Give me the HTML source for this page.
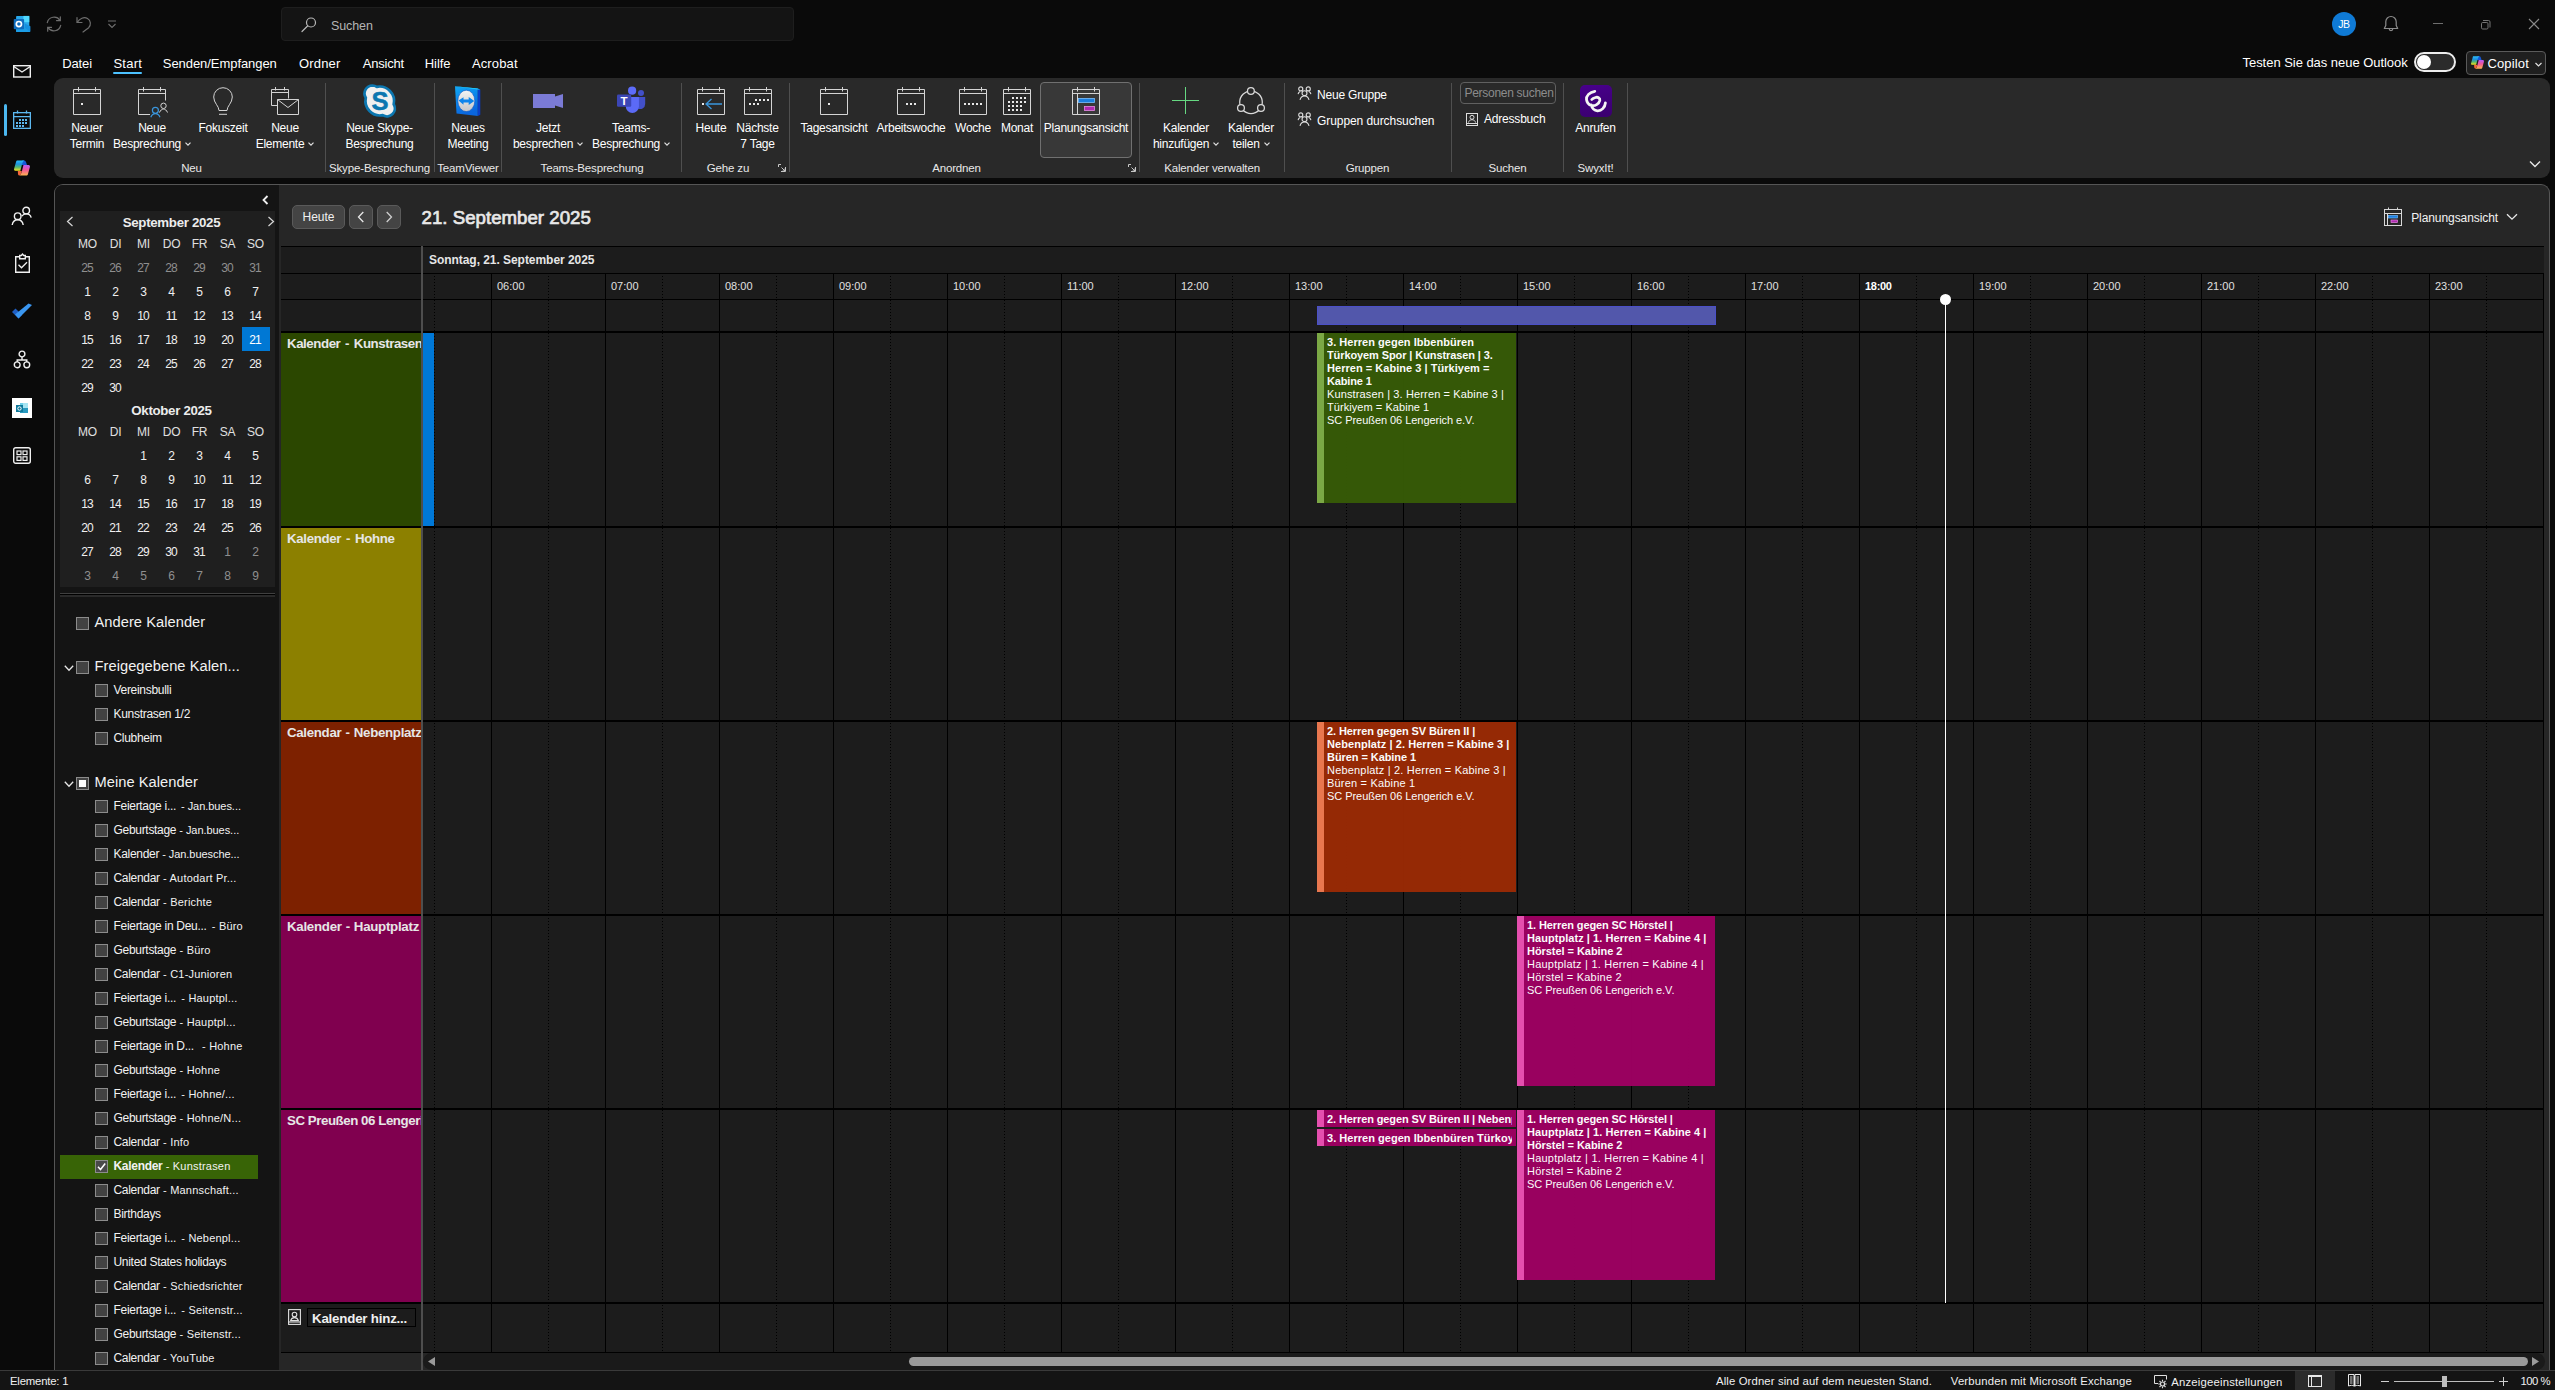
<!DOCTYPE html>
<html lang="de"><head><meta charset="utf-8"><title>Kalender - Outlook</title>
<style>
*{box-sizing:border-box;margin:0;padding:0}
html,body{width:2555px;height:1390px;overflow:hidden;background:#0a0a0a}
body{position:relative;font-family:"Liberation Sans","DejaVu Sans",sans-serif;font-size:12px;color:#fff}
div{position:absolute}
.t{white-space:nowrap}
svg{position:absolute;overflow:visible}
</style></head>
<body>
<div style="left:54px;top:78px;width:2496px;height:100px;background:#292929;border-radius:9px;"></div>
<div style="left:54px;top:184px;width:2496px;height:1187px;background:#262626;border-radius:9px 9px 0 0;border:1px solid #555;border-bottom:none;overflow:hidden;"></div>
<div style="left:55px;top:185px;width:224px;height:1185px;background:#141414;border-radius:8px 0 0 0;"></div>
<div style="left:60px;top:211px;width:215px;height:376px;background:#1f1f1f;"></div>
<div style="left:60px;top:593px;width:215px;height:1px;background:#404040;"></div>
<div style="left:60px;top:594px;width:215px;height:1px;background:#000;"></div>
<div style="left:60px;top:595px;width:215px;height:2px;background:#2a2a2a;"></div>
<div style="left:0px;top:1370px;width:2555px;height:1px;background:#3a3a3a;"></div>
<div style="left:0px;top:1371px;width:2555px;height:19px;background:#141414;"></div>
<div style="left:281px;top:246px;width:2263px;height:1107px;background:#1c1c1c;"></div>
<div style="left:281px;top:246px;width:2263px;height:1px;background:#000;"></div>
<div style="left:281px;top:273px;width:2263px;height:1px;background:#000;"></div>
<div style="left:281px;top:299px;width:2263px;height:1px;background:#000;"></div>
<div style="left:281px;top:331px;width:2263px;height:2px;background:#000;"></div>
<div style="left:281px;top:526px;width:2263px;height:2px;background:#000;"></div>
<div style="left:281px;top:720px;width:2263px;height:2px;background:#000;"></div>
<div style="left:281px;top:914px;width:2263px;height:2px;background:#000;"></div>
<div style="left:281px;top:1108px;width:2263px;height:2px;background:#000;"></div>
<div style="left:281px;top:1302px;width:2263px;height:2px;background:#000;"></div>
<div style="left:281px;top:1352px;width:2263px;height:1px;background:#000;"></div>
<div style="left:491px;top:274px;width:1px;height:1078px;background:#000;"></div>
<div style="left:605px;top:274px;width:1px;height:1078px;background:#000;"></div>
<div style="left:719px;top:274px;width:1px;height:1078px;background:#000;"></div>
<div style="left:833px;top:274px;width:1px;height:1078px;background:#000;"></div>
<div style="left:947px;top:274px;width:1px;height:1078px;background:#000;"></div>
<div style="left:1061px;top:274px;width:1px;height:1078px;background:#000;"></div>
<div style="left:1175px;top:274px;width:1px;height:1078px;background:#000;"></div>
<div style="left:1289px;top:274px;width:1px;height:1078px;background:#000;"></div>
<div style="left:1403px;top:274px;width:1px;height:1078px;background:#000;"></div>
<div style="left:1517px;top:274px;width:1px;height:1078px;background:#000;"></div>
<div style="left:1631px;top:274px;width:1px;height:1078px;background:#000;"></div>
<div style="left:1745px;top:274px;width:1px;height:1078px;background:#000;"></div>
<div style="left:1859px;top:274px;width:1px;height:1078px;background:#000;"></div>
<div style="left:1973px;top:274px;width:1px;height:1078px;background:#000;"></div>
<div style="left:2087px;top:274px;width:1px;height:1078px;background:#000;"></div>
<div style="left:2201px;top:274px;width:1px;height:1078px;background:#000;"></div>
<div style="left:2315px;top:274px;width:1px;height:1078px;background:#000;"></div>
<div style="left:2429px;top:274px;width:1px;height:1078px;background:#000;"></div>
<div style="left:2543px;top:274px;width:1px;height:1078px;background:#000;"></div>
<div style="left:434px;top:276px;width:1px;height:1076px;background:repeating-linear-gradient(to bottom,#000 0,#000 1px,transparent 1px,transparent 3px);"></div>
<div style="left:548px;top:276px;width:1px;height:1076px;background:repeating-linear-gradient(to bottom,#000 0,#000 1px,transparent 1px,transparent 3px);"></div>
<div style="left:662px;top:276px;width:1px;height:1076px;background:repeating-linear-gradient(to bottom,#000 0,#000 1px,transparent 1px,transparent 3px);"></div>
<div style="left:776px;top:276px;width:1px;height:1076px;background:repeating-linear-gradient(to bottom,#000 0,#000 1px,transparent 1px,transparent 3px);"></div>
<div style="left:890px;top:276px;width:1px;height:1076px;background:repeating-linear-gradient(to bottom,#000 0,#000 1px,transparent 1px,transparent 3px);"></div>
<div style="left:1004px;top:276px;width:1px;height:1076px;background:repeating-linear-gradient(to bottom,#000 0,#000 1px,transparent 1px,transparent 3px);"></div>
<div style="left:1118px;top:276px;width:1px;height:1076px;background:repeating-linear-gradient(to bottom,#000 0,#000 1px,transparent 1px,transparent 3px);"></div>
<div style="left:1232px;top:276px;width:1px;height:1076px;background:repeating-linear-gradient(to bottom,#000 0,#000 1px,transparent 1px,transparent 3px);"></div>
<div style="left:1346px;top:276px;width:1px;height:1076px;background:repeating-linear-gradient(to bottom,#000 0,#000 1px,transparent 1px,transparent 3px);"></div>
<div style="left:1460px;top:276px;width:1px;height:1076px;background:repeating-linear-gradient(to bottom,#000 0,#000 1px,transparent 1px,transparent 3px);"></div>
<div style="left:1574px;top:276px;width:1px;height:1076px;background:repeating-linear-gradient(to bottom,#000 0,#000 1px,transparent 1px,transparent 3px);"></div>
<div style="left:1688px;top:276px;width:1px;height:1076px;background:repeating-linear-gradient(to bottom,#000 0,#000 1px,transparent 1px,transparent 3px);"></div>
<div style="left:1802px;top:276px;width:1px;height:1076px;background:repeating-linear-gradient(to bottom,#000 0,#000 1px,transparent 1px,transparent 3px);"></div>
<div style="left:1916px;top:276px;width:1px;height:1076px;background:repeating-linear-gradient(to bottom,#000 0,#000 1px,transparent 1px,transparent 3px);"></div>
<div style="left:2030px;top:276px;width:1px;height:1076px;background:repeating-linear-gradient(to bottom,#000 0,#000 1px,transparent 1px,transparent 3px);"></div>
<div style="left:2144px;top:276px;width:1px;height:1076px;background:repeating-linear-gradient(to bottom,#000 0,#000 1px,transparent 1px,transparent 3px);"></div>
<div style="left:2258px;top:276px;width:1px;height:1076px;background:repeating-linear-gradient(to bottom,#000 0,#000 1px,transparent 1px,transparent 3px);"></div>
<div style="left:2372px;top:276px;width:1px;height:1076px;background:repeating-linear-gradient(to bottom,#000 0,#000 1px,transparent 1px,transparent 3px);"></div>
<div style="left:2486px;top:276px;width:1px;height:1076px;background:repeating-linear-gradient(to bottom,#000 0,#000 1px,transparent 1px,transparent 3px);"></div>
<div style="left:421px;top:246px;width:2px;height:1124px;background:#4e4e4e;"></div>
<div style="left:281px;top:333px;width:140px;height:193px;background:#2b4700;overflow:hidden"><div class="t" style="left:6px;top:1.750px;font-size:13.3px;line-height:18px;font-weight:700;color:#e6e6e6;letter-spacing:-0.45px;word-spacing:1.5px">Kalender - Kunstrasen</div></div>
<div style="left:281px;top:528px;width:140px;height:192px;background:#8c8000;overflow:hidden"><div class="t" style="left:6px;top:1.750px;font-size:13.3px;line-height:18px;font-weight:700;color:#e6e6e6;letter-spacing:-0.34px;word-spacing:1.5px">Kalender - Hohne</div></div>
<div style="left:281px;top:722px;width:140px;height:192px;background:#7d2100;overflow:hidden"><div class="t" style="left:6px;top:1.750px;font-size:13.3px;line-height:18px;font-weight:700;color:#e6e6e6;letter-spacing:-0.32px;word-spacing:0.8px">Calendar - Nebenplatz</div></div>
<div style="left:281px;top:916px;width:140px;height:192px;background:#80004f;overflow:hidden"><div class="t" style="left:6px;top:1.750px;font-size:13.3px;line-height:18px;font-weight:700;color:#e6e6e6;letter-spacing:-0.28px;word-spacing:0.6px">Kalender - Hauptplatz</div></div>
<div style="left:281px;top:1110px;width:140px;height:192px;background:#80004f;overflow:hidden"><div class="t" style="left:6px;top:1.750px;font-size:13.3px;line-height:18px;font-weight:700;color:#e6e6e6;letter-spacing:-0.45px;word-spacing:0px">SC Preußen 06 Lengerich</div></div>
<div style="left:423px;top:333px;width:11px;height:193px;background:#0078d7;"></div>
<div class="t" style="top:251.7px;font-size:12px;line-height:17px;color:#e6e6e6;font-weight:700;letter-spacing:-0.049px;left:429px;">Sonntag, 21. September 2025</div>
<div class="t" style="top:278.5px;font-size:11px;line-height:15px;color:#e0e0e0;left:497px;">06:00</div>
<div class="t" style="top:278.5px;font-size:11px;line-height:15px;color:#e0e0e0;left:611px;">07:00</div>
<div class="t" style="top:278.5px;font-size:11px;line-height:15px;color:#e0e0e0;left:725px;">08:00</div>
<div class="t" style="top:278.5px;font-size:11px;line-height:15px;color:#e0e0e0;left:839px;">09:00</div>
<div class="t" style="top:278.5px;font-size:11px;line-height:15px;color:#e0e0e0;left:953px;">10:00</div>
<div class="t" style="top:278.5px;font-size:11px;line-height:15px;color:#e0e0e0;left:1067px;">11:00</div>
<div class="t" style="top:278.5px;font-size:11px;line-height:15px;color:#e0e0e0;left:1181px;">12:00</div>
<div class="t" style="top:278.5px;font-size:11px;line-height:15px;color:#e0e0e0;left:1295px;">13:00</div>
<div class="t" style="top:278.5px;font-size:11px;line-height:15px;color:#e0e0e0;left:1409px;">14:00</div>
<div class="t" style="top:278.5px;font-size:11px;line-height:15px;color:#e0e0e0;left:1523px;">15:00</div>
<div class="t" style="top:278.5px;font-size:11px;line-height:15px;color:#e0e0e0;left:1637px;">16:00</div>
<div class="t" style="top:278.5px;font-size:11px;line-height:15px;color:#e0e0e0;left:1751px;">17:00</div>
<div class="t" style="top:278.5px;font-size:11px;line-height:15px;color:#fff;font-weight:700;letter-spacing:-0.3px;left:1865px;">18:00</div>
<div class="t" style="top:278.5px;font-size:11px;line-height:15px;color:#e0e0e0;left:1979px;">19:00</div>
<div class="t" style="top:278.5px;font-size:11px;line-height:15px;color:#e0e0e0;left:2093px;">20:00</div>
<div class="t" style="top:278.5px;font-size:11px;line-height:15px;color:#e0e0e0;left:2207px;">21:00</div>
<div class="t" style="top:278.5px;font-size:11px;line-height:15px;color:#e0e0e0;left:2321px;">22:00</div>
<div class="t" style="top:278.5px;font-size:11px;line-height:15px;color:#e0e0e0;left:2435px;">23:00</div>
<div style="left:1317px;top:306px;width:399px;height:19px;background:#5257ab;border:1px solid #4b50c8"></div>
<div style="left:1317px;top:333px;width:199px;height:170px;background:rgba(55,92,6,0.95);overflow:hidden"><div style="left:0;top:0;width:6.500px;height:100%;background:#7ba845"></div><div style="left:10px;top:3px;right:0px;height:167px;overflow:hidden;font-size:11px;line-height:13px;color:#fbfbfb;white-space:nowrap"><b style="letter-spacing:0.031px">3. Herren gegen Ibbenbüren</b><br><b style="letter-spacing:-0.099px">Türkoyem Spor | Kunstrasen | 3.</b><br><b style="letter-spacing:0.033px">Herren = Kabine 3 | Türkiyem =</b><br><b style="letter-spacing:-0.156px">Kabine 1</b><br><span style="letter-spacing:0.133px">Kunstrasen | 3. Herren = Kabine 3 |</span><br><span style="letter-spacing:0.058px">Türkiyem = Kabine 1</span><br><span style="letter-spacing:-0.05px">SC Preußen 06 Lengerich e.V.</span></div></div>
<div style="left:1317px;top:722px;width:199px;height:170px;background:rgba(156,42,4,0.95);overflow:hidden"><div style="left:0;top:0;width:6.500px;height:100%;background:#e8774f"></div><div style="left:10px;top:3px;right:0px;height:167px;overflow:hidden;font-size:11px;line-height:13px;color:#fbfbfb;white-space:nowrap"><b style="letter-spacing:-0.1px">2. Herren gegen SV Büren II |</b><br><b style="letter-spacing:0.066px">Nebenplatz | 2. Herren = Kabine 3 |</b><br><b style="letter-spacing:-0.067px">Büren = Kabine 1</b><br><span style="letter-spacing:0.187px">Nebenplatz | 2. Herren = Kabine 3 |</span><br><span style="letter-spacing:0.186px">Büren = Kabine 1</span><br><span style="letter-spacing:-0.043px">SC Preußen 06 Lengerich e.V.</span></div></div>
<div style="left:1517px;top:916px;width:198px;height:170px;background:rgba(160,0,99,0.95);overflow:hidden"><div style="left:0;top:0;width:6.500px;height:100%;background:#e44fae"></div><div style="left:10px;top:3px;right:0px;height:167px;overflow:hidden;font-size:11px;line-height:13px;color:#fbfbfb;white-space:nowrap"><b style="letter-spacing:-0.099px">1. Herren gegen SC Hörstel |</b><br><b style="letter-spacing:0.054px">Hauptplatz | 1. Herren = Kabine 4 |</b><br><b style="letter-spacing:-0.049px">Hörstel = Kabine 2</b><br><span style="letter-spacing:0.217px">Hauptplatz | 1. Herren = Kabine 4 |</span><br><span style="letter-spacing:0.227px">Hörstel = Kabine 2</span><br><span style="letter-spacing:-0.05px">SC Preußen 06 Lengerich e.V.</span></div></div>
<div style="left:1517px;top:1110px;width:198px;height:170px;background:rgba(160,0,99,0.95);overflow:hidden"><div style="left:0;top:0;width:6.500px;height:100%;background:#e44fae"></div><div style="left:10px;top:3px;right:0px;height:167px;overflow:hidden;font-size:11px;line-height:13px;color:#fbfbfb;white-space:nowrap"><b style="letter-spacing:-0.099px">1. Herren gegen SC Hörstel |</b><br><b style="letter-spacing:0.054px">Hauptplatz | 1. Herren = Kabine 4 |</b><br><b style="letter-spacing:-0.049px">Hörstel = Kabine 2</b><br><span style="letter-spacing:0.217px">Hauptplatz | 1. Herren = Kabine 4 |</span><br><span style="letter-spacing:0.227px">Hörstel = Kabine 2</span><br><span style="letter-spacing:-0.05px">SC Preußen 06 Lengerich e.V.</span></div></div>
<div style="left:1317px;top:1110px;width:199px;height:17px;background:rgba(160,0,99,0.95);overflow:hidden"><div style="left:0;top:0;width:6.500px;height:100%;background:#e44fae"></div><div style="left:10px;top:3px;right:4px;height:14px;overflow:hidden;font-size:11px;line-height:13px;color:#fbfbfb;white-space:nowrap"><b style="letter-spacing:-0.102px">2. Herren gegen SV Büren II | Nebenplatz</b></div></div>
<div style="left:1317px;top:1129px;width:199px;height:17px;background:rgba(160,0,99,0.95);overflow:hidden"><div style="left:0;top:0;width:6.500px;height:100%;background:#e44fae"></div><div style="left:10px;top:3px;right:4px;height:14px;overflow:hidden;font-size:11px;line-height:13px;color:#fbfbfb;white-space:nowrap"><b style="letter-spacing:0.032px">3. Herren gegen Ibbenbüren Türkoyem</b></div></div>
<div style="left:1945px;top:300px;width:1px;height:1003px;background:#fff;"></div>
<div style="left:1940px;top:294px;width:11px;height:11px;background:#fff;border-radius:50%"></div>
<svg style="left:288px;top:1309px" width="13" height="16" viewBox="0 0 13 16" fill="none" stroke="#e0e0e0" stroke-width="1.1"><rect x="0.6" y="0.6" width="11.8" height="14.8"/><circle cx="6.5" cy="5.6" r="2.3"/><path d="M2.6 11.6c.6-2 2.2-3 3.9-3s3.300 1 3.900 3z"/><path d="M0 13h13" stroke="#e0e0e0"/></svg>
<div style="left:307px;top:1308px;width:109px;height:19px;background:#1c1c1c;border:1px solid #000"></div>
<div class="t" style="top:1308.5px;font-size:13.3px;line-height:19px;color:#f0f0f0;font-weight:700;letter-spacing:-0.2px;left:312px;">Kalender hinz...</div>
<div style="left:423px;top:1353px;width:2122px;height:17px;background:#1a1a1a;border-radius:8.5px"></div>
<div style="left:909px;top:1357px;width:1619px;height:9px;background:#9a9a9a;border-radius:5px"></div>
<svg style="left:428px;top:1357px" width="7" height="9"><path d="M7 0v9L0 4.500z" fill="#9a9a9a"/></svg>
<svg style="left:2532px;top:1357px" width="7" height="9"><path d="M0 0v9L7 4.500z" fill="#9a9a9a"/></svg>
<svg style="left:13px;top:15px" width="18" height="18" viewBox="0 0 18 18" fill="none" ><rect x="3.100" y=".900" width="13.200" height="16.200" rx=".800" fill="#28a8ea"/><rect x="10.400" y=".900" width="5.900" height="6.300" fill="#50d9ff"/><path d="M3.100 7.200h7.300v6H3.100z" fill="#0f78d4"/><path d="M11.800 8.400l5.600 2.800v5.100a.8.800 0 0 1-.8.800H11.800z" fill="#1490df"/><path d="M3.100 14.200l8.700-1.500 5.300 4.100a1 1 0 0 1-.5.300H3.900a.8.800 0 0 1-.8-.8z" fill="#1b9de6"/><rect x=".750" y="3.900" width="10.350" height="10.350" rx=".900" fill="#0f6cbd"/><circle cx="5.900" cy="9.100" r="2.600" stroke="#fff" stroke-width="1.700"/></svg>
<svg style="left:45px;top:15px" width="18" height="18" viewBox="0 0 18 18" fill="none" ><g stroke="#6e6e6e" stroke-width="1.200" stroke-linecap="round"><path d="M2.300 7.600A7 7 0 0 1 15 5.300M15.700 10.400A7 7 0 0 1 3 12.700"/><path d="M15.300 1.800v3.800h-3.800M2.700 16.200v-3.800h3.800"/></g></svg>
<svg style="left:75px;top:15px" width="18" height="18" viewBox="0 0 18 18" fill="none" ><g stroke="#6e6e6e" stroke-width="1.200" stroke-linecap="round" stroke-linejoin="round"><path d="M2 2.500v5h5"/><path d="M2.300 7.300C4.500 3.500 9 1.500 12.500 3.500c3.500 2 3.700 6.500 1.200 9.200L8 17"/></g></svg>
<svg style="left:107px;top:20px" width="10" height="9" viewBox="0 0 10 9" fill="none" ><path d="M1 1h8M1.500 4l3.500 3.500L8.500 4" stroke="#6e6e6e" stroke-width="1.100"/></svg>
<div style="left:281px;top:7px;width:513px;height:34px;background:#141414;border-radius:4px;border:1px solid #1e1e1e"></div>
<svg style="left:300px;top:16px" width="18" height="18" viewBox="0 0 18 18" fill="none" ><circle cx="11" cy="6.500" r="4.500" stroke="#b8b8b8" stroke-width="1.200"/><path d="M7.800 9.800L2 15.500" stroke="#b8b8b8" stroke-width="1.200" stroke-linecap="round"/></svg>
<div class="t" style="top:16.6px;font-size:12.5px;line-height:18px;color:#b4b4b4;letter-spacing:-0.1px;left:331px;">Suchen</div>
<div style="left:2332px;top:12px;width:24px;height:24px;background:#0f7ad5;border-radius:50%"></div>
<div class="t" style="top:17.0px;font-size:10.5px;line-height:15px;color:#fff;letter-spacing:-0.5px;left:2044px;width:600px;text-align:center;">JB</div>
<svg style="left:2381px;top:14px" width="20" height="20" viewBox="0 0 20 20" fill="none" ><g stroke="#8c8c8c" stroke-width="1.200" stroke-linejoin="round"><path d="M10 2.500a5.200 5.200 0 0 0-5.200 5.200v3.800L3.300 14.500h13.400l-1.500-3V7.700A5.200 5.200 0 0 0 10 2.500z"/><path d="M8.200 14.800a1.800 1.800 0 0 0 3.600 0"/></g></svg>
<div style="left:2433px;top:23px;width:10px;height:1px;background:#6e6e6e;"></div>
<svg style="left:2480px;top:18px" width="12" height="12" viewBox="0 0 12 12" fill="none" ><path d="M3 2.500h5.500a1.500 1.500 0 0 1 1.500 1.500V9.500" stroke="#757575"/><rect x="1.500" y="4.500" width="6.500" height="6.500" rx="1.200" stroke="#757575"/></svg>
<svg style="left:2528px;top:18px" width="12" height="12" viewBox="0 0 12 12" fill="none" ><path d="M1 1l10 10M11 1L1 11" stroke="#8a8a8a" stroke-width="1.100"/></svg>
<div class="t" style="top:54.5px;font-size:13px;line-height:18px;color:#fff;letter-spacing:-0.11px;left:62.2px;">Datei</div>
<div class="t" style="top:54.5px;font-size:13px;line-height:18px;color:#fff;letter-spacing:0.269px;left:113.4px;">Start</div>
<div class="t" style="top:54.5px;font-size:13px;line-height:18px;color:#fff;letter-spacing:-0.058px;left:162.8px;">Senden/Empfangen</div>
<div class="t" style="top:54.5px;font-size:13px;line-height:18px;color:#fff;letter-spacing:0.206px;left:298.9px;">Ordner</div>
<div class="t" style="top:54.5px;font-size:13px;line-height:18px;color:#fff;letter-spacing:-0.219px;left:362.8px;">Ansicht</div>
<div class="t" style="top:54.5px;font-size:13px;line-height:18px;color:#fff;letter-spacing:-0.081px;left:424.8px;">Hilfe</div>
<div class="t" style="top:54.5px;font-size:13px;line-height:18px;color:#fff;letter-spacing:0.142px;left:471.9px;">Acrobat</div>
<div style="left:113px;top:72px;width:29px;height:2px;background:#4cc2ff;border-radius:1px"></div>
<div class="t" style="top:54.0px;font-size:13px;line-height:18px;color:#fff;letter-spacing:-0.038px;left:2242.5px;">Testen Sie das neue Outlook</div>
<div style="left:2414px;top:52px;width:42px;height:20px;background:#2b2b2b;border:2px solid #ededed;border-radius:10px"></div>
<div style="left:2417px;top:55px;width:14px;height:14px;background:#fff;border-radius:50%"></div>
<div style="left:2466px;top:51px;width:80px;height:24px;background:#1f1f1f;border:1px solid #5a5a5a;border-radius:4px"></div>
<div class="t" style="top:54.6px;font-size:13px;line-height:18px;color:#fff;letter-spacing:0.147px;left:2487.4px;">Copilot</div>
<svg style="left:2535px;top:62px" width="7" height="5" viewBox="0 0 7 5" fill="none" ><path d="M0.500 1l3 3 3-3" stroke="#e0e0e0" stroke-width="1.200"/></svg>
<svg style="left:71px;top:84px" width="32" height="32" viewBox="0 0 32 32" fill="none" ><g stroke="#d4d4d4" stroke-width="1"><path d="M2.5 5.500h27v25h-27z"/><path d="M2.500 9.500h27M7.500 3v4.500M24.500 3v4.500"/></g><rect x="10" y="19" width="2" height="2" fill="#e8e8e8"/></svg>
<div class="t" style="top:119.5px;font-size:12px;line-height:17px;color:#fff;letter-spacing:-0.25px;left:-213px;width:600px;text-align:center;">Neuer</div>
<div class="t" style="top:135.5px;font-size:12px;line-height:17px;color:#fff;letter-spacing:-0.25px;left:-213px;width:600px;text-align:center;">Termin</div>
<svg style="left:136px;top:84px" width="32" height="32" viewBox="0 0 32 32" fill="none" ><g stroke="#d4d4d4" stroke-width="1"><path d="M29.500 16.500v-11h-27v25h11.500"/><path d="M2.500 9.500h27M7.500 3v4.500M24.500 3v4.500"/></g><g transform="translate(1.800 0)"><circle cx="25.700" cy="21.800" r="2.700" stroke="#d4d4d4"/><path d="M21.700 28.500c.9-2.300 2.400-3.400 4-3.400s3.100 1.100 4 3.400" stroke="#d4d4d4"/><circle cx="17.600" cy="26.300" r="3" stroke="#3a96dd" stroke-width="1.200"/><path d="M13 33.200c1-2.500 2.700-3.600 4.600-3.600s3.600 1.100 4.600 3.600" stroke="#3a96dd" stroke-width="1.200"/></g></svg>
<div class="t" style="top:119.5px;font-size:12px;line-height:17px;color:#fff;letter-spacing:-0.25px;left:-148px;width:600px;text-align:center;">Neue</div>
<div class="t" style="top:135.5px;font-size:12px;line-height:17px;color:#fff;letter-spacing:-0.25px;left:-148px;width:600px;text-align:center;">Besprechung<svg style="position:relative;display:inline-block;margin-left:4px;top:-2px" width="6" height="4" viewBox="0 0 6 4"><path d="M0.500 0.700l2.500 2.500 2.500-2.500" stroke="#e0e0e0" stroke-width="1.200" fill="none"/></svg></div>
<svg style="left:207px;top:84px" width="32" height="32" viewBox="0 0 32 32" fill="none" ><g stroke="#d4d4d4" stroke-width="1"><path d="M12 26.500c0-4.500-5.300-7.500-5.300-13.500a9.300 9.300 0 0 1 18.600 0c0 6-5.300 9-5.300 13.500z"/><path d="M12 30.300h8"/></g></svg>
<div class="t" style="top:119.5px;font-size:12px;line-height:17px;color:#fff;letter-spacing:-0.25px;left:-77px;width:600px;text-align:center;">Fokuszeit</div>
<svg style="left:268px;top:84px" width="34" height="32" viewBox="0 0 34 32" fill="none" ><g stroke="#d4d4d4" stroke-width="1"><path d="M20.500 14.500v-9h-17v16h6"/><path d="M3.500 8.500h17M7.500 3v3.500M16.500 3v3.500"/><path d="M9.500 15.500h21v15h-21z"/><path d="M9.500 15.500l10.500 8 10.500-8"/></g></svg>
<div class="t" style="top:119.5px;font-size:12px;line-height:17px;color:#fff;letter-spacing:-0.25px;left:-15px;width:600px;text-align:center;">Neue</div>
<div class="t" style="top:135.5px;font-size:12px;line-height:17px;color:#fff;letter-spacing:-0.25px;left:-15px;width:600px;text-align:center;">Elemente<svg style="position:relative;display:inline-block;margin-left:4px;top:-2px" width="6" height="4" viewBox="0 0 6 4"><path d="M0.500 0.700l2.500 2.500 2.500-2.500" stroke="#e0e0e0" stroke-width="1.200" fill="none"/></svg></div>
<div class="t" style="top:160.0px;font-size:11.5px;line-height:16px;color:#e8e8e8;letter-spacing:-0.15px;left:-108.5px;width:600px;text-align:center;">Neu</div>
<div style="left:325px;top:83px;width:1px;height:89px;background:#4f4f4f;"></div>
<svg style="left:363px;top:84px" width="34" height="34" viewBox="0 0 34 34" fill="none" ><path d="M9.500 1.500a8 8 0 0 0-6.700 12.300 14.500 14.500 0 0 0 16.900 17.400 8 8 0 0 0 11-11A14.500 14.500 0 0 0 13.800 2.800 8 8 0 0 0 9.500 1.500z" fill="#f0f0f0" stroke="#0c77b0" stroke-width="2.700"/></svg>
<div class="t" style="top:83.0px;font-size:25.5px;line-height:36px;color:#0c77b0;font-weight:700;left:80px;width:600px;text-align:center;-webkit-text-stroke:.500px #0c77b0;">S</div>
<div class="t" style="top:119.5px;font-size:12px;line-height:17px;color:#fff;letter-spacing:-0.25px;left:79.5px;width:600px;text-align:center;">Neue Skype-</div>
<div class="t" style="top:135.5px;font-size:12px;line-height:17px;color:#fff;letter-spacing:-0.25px;left:79.5px;width:600px;text-align:center;">Besprechung</div>
<div class="t" style="top:160.0px;font-size:11.5px;line-height:16px;color:#e8e8e8;letter-spacing:-0.15px;left:79.5px;width:600px;text-align:center;">Skype-Besprechung</div>
<div style="left:434px;top:83px;width:1px;height:89px;background:#4f4f4f;"></div>
<svg style="left:453px;top:84px" width="30" height="34" viewBox="0 0 30 34" fill="none" ><defs><linearGradient id="tvg" x1="0" y1="0" x2=".3" y2="1"><stop offset="0" stop-color="#12a8f4"/><stop offset=".5" stop-color="#0b86ea"/><stop offset="1" stop-color="#0a66de"/></linearGradient><linearGradient id="tvc" x1="0" y1="0" x2="0" y2="1"><stop offset="0" stop-color="#f4f4f4"/><stop offset="1" stop-color="#c4c6c8"/></linearGradient></defs><path d="M2 2.200L24.800 4.600v27.400L3.500 29.600z" fill="url(#tvg)"/><path d="M24.800 4.600l2.500 1.200v25l-2.500 1.200z" fill="#0a3ec6"/><path d="M2 2.200L24.800 4.600l2.500 1.200-2.500-.200z" fill="#20d0ff"/><ellipse cx="13.300" cy="16.900" rx="8.500" ry="10.700" fill="url(#tvc)" stroke="#0a50c0" stroke-width=".600"/><path d="M5.500 16.600l5-3.400v2.200h5.200v-2.400l5.600 4-5.600 4v-2.400h-5.200v2.200z" fill="#0c84ec"/></svg>
<div class="t" style="top:119.5px;font-size:12px;line-height:17px;color:#fff;letter-spacing:-0.25px;left:168px;width:600px;text-align:center;">Neues</div>
<div class="t" style="top:135.5px;font-size:12px;line-height:17px;color:#fff;letter-spacing:-0.25px;left:168px;width:600px;text-align:center;">Meeting</div>
<div class="t" style="top:160.0px;font-size:11.5px;line-height:16px;color:#e8e8e8;letter-spacing:-0.15px;left:168px;width:600px;text-align:center;">TeamViewer</div>
<div style="left:501px;top:83px;width:1px;height:89px;background:#4f4f4f;"></div>
<svg style="left:532px;top:91px" width="32" height="20" viewBox="0 0 32 20" fill="none" ><path d="M1 3h22v14H1z" fill="#7b7bd6"/><path d="M23 5.500L31 3v14l-8-2.500z" fill="#7b7bd6"/></svg>
<div class="t" style="top:119.5px;font-size:12px;line-height:17px;color:#fff;letter-spacing:-0.25px;left:248px;width:600px;text-align:center;">Jetzt</div>
<div class="t" style="top:135.5px;font-size:12px;line-height:17px;color:#fff;letter-spacing:-0.25px;left:248px;width:600px;text-align:center;">besprechen<svg style="position:relative;display:inline-block;margin-left:4px;top:-2px" width="6" height="4" viewBox="0 0 6 4"><path d="M0.500 0.700l2.500 2.500 2.500-2.500" stroke="#e0e0e0" stroke-width="1.200" fill="none"/></svg></div>
<svg style="left:615px;top:85px" width="32" height="32" viewBox="0 0 32 32" fill="none" ><circle cx="26" cy="8" r="3" fill="#4250c8"/><path d="M22.500 12h7.700v7a5 5 0 0 1-7.700 4.200z" fill="#4250c8"/><circle cx="17.100" cy="5.700" r="4.100" fill="#5d6cfa"/><path d="M10.750 12h13.200v9.300a6.600 6.600 0 0 1-13.200 0z" fill="#5b6af6"/><rect x="2" y="9.500" width="14.200" height="12.300" rx="1.200" fill="#3b46b6"/></svg>
<div class="t" style="top:92.6px;font-size:11.5px;line-height:16px;color:#fff;font-weight:700;left:324.1px;width:600px;text-align:center;">T</div>
<div class="t" style="top:119.5px;font-size:12px;line-height:17px;color:#fff;letter-spacing:-0.25px;left:331px;width:600px;text-align:center;">Teams-</div>
<div class="t" style="top:135.5px;font-size:12px;line-height:17px;color:#fff;letter-spacing:-0.25px;left:331px;width:600px;text-align:center;">Besprechung<svg style="position:relative;display:inline-block;margin-left:4px;top:-2px" width="6" height="4" viewBox="0 0 6 4"><path d="M0.500 0.700l2.500 2.500 2.500-2.500" stroke="#e0e0e0" stroke-width="1.200" fill="none"/></svg></div>
<div class="t" style="top:160.0px;font-size:11.5px;line-height:16px;color:#e8e8e8;letter-spacing:-0.15px;left:292px;width:600px;text-align:center;">Teams-Besprechung</div>
<div style="left:681px;top:83px;width:1px;height:89px;background:#4f4f4f;"></div>
<svg style="left:695px;top:84px" width="32" height="32" viewBox="0 0 32 32" fill="none" ><g stroke="#d4d4d4" stroke-width="1"><path d="M2.5 5.500h27v25h-27z"/><path d="M2.500 9.500h27M7.500 3v4.500M24.500 3v4.500"/></g><rect x="7" y="19" width="2" height="2" fill="#e8e8e8"/><path d="M27 20h-15.500M16.500 15l-5.500 5 5.500 5" stroke="#3a96dd" stroke-width="1.300"/></svg>
<div class="t" style="top:119.5px;font-size:12px;line-height:17px;color:#fff;letter-spacing:-0.25px;left:411px;width:600px;text-align:center;">Heute</div>
<svg style="left:742px;top:84px" width="32" height="32" viewBox="0 0 32 32" fill="none" ><g stroke="#d4d4d4" stroke-width="1"><path d="M2.5 5.500h27v25h-27z"/><path d="M2.500 9.500h27M7.500 3v4.500M24.500 3v4.500"/></g><rect x="13" y="15" width="2" height="2" fill="#e8e8e8"/><rect x="17" y="15" width="2" height="2" fill="#e8e8e8"/><rect x="21" y="15" width="2" height="2" fill="#e8e8e8"/><rect x="25" y="15" width="2" height="2" fill="#e8e8e8"/><rect x="7" y="19" width="2" height="2" fill="#e8e8e8"/><rect x="11" y="19" width="2" height="2" fill="#e8e8e8"/><rect x="15" y="19" width="2" height="2" fill="#e8e8e8"/></svg>
<div class="t" style="top:119.5px;font-size:12px;line-height:17px;color:#fff;letter-spacing:-0.25px;left:457.5px;width:600px;text-align:center;">Nächste</div>
<div class="t" style="top:135.5px;font-size:12px;line-height:17px;color:#fff;letter-spacing:-0.25px;left:457.5px;width:600px;text-align:center;">7 Tage</div>
<div class="t" style="top:160.0px;font-size:11.5px;line-height:16px;color:#e8e8e8;letter-spacing:-0.15px;left:428px;width:600px;text-align:center;">Gehe zu</div>
<svg style="left:778px;top:164px" width="8" height="8" viewBox="0 0 8 8" fill="none" ><path d="M0.500 3V0.500H3M3 7.500h4.500V3M3.500 3.500l3.500 3.500M7 4.500V7H4.500" stroke="#c8c8c8" stroke-width="1"/></svg>
<div style="left:789px;top:83px;width:1px;height:89px;background:#4f4f4f;"></div>
<svg style="left:818px;top:84px" width="32" height="32" viewBox="0 0 32 32" fill="none" ><g stroke="#d4d4d4" stroke-width="1"><path d="M2.5 5.500h27v25h-27z"/><path d="M2.500 9.500h27M7.500 3v4.500M24.500 3v4.500"/></g><rect x="10" y="19" width="2" height="2" fill="#e8e8e8"/></svg>
<div class="t" style="top:119.5px;font-size:12px;line-height:17px;color:#fff;letter-spacing:-0.25px;left:534px;width:600px;text-align:center;">Tagesansicht</div>
<svg style="left:895px;top:84px" width="32" height="32" viewBox="0 0 32 32" fill="none" ><g stroke="#d4d4d4" stroke-width="1"><path d="M2.5 5.500h27v25h-27z"/><path d="M2.500 9.500h27M7.500 3v4.500M24.500 3v4.500"/></g><rect x="11" y="19" width="2" height="2" fill="#e8e8e8"/><rect x="15" y="19" width="2" height="2" fill="#e8e8e8"/><rect x="19" y="19" width="2" height="2" fill="#e8e8e8"/></svg>
<div class="t" style="top:119.5px;font-size:12px;line-height:17px;color:#fff;letter-spacing:-0.25px;left:611px;width:600px;text-align:center;">Arbeitswoche</div>
<svg style="left:957px;top:84px" width="32" height="32" viewBox="0 0 32 32" fill="none" ><g stroke="#d4d4d4" stroke-width="1"><path d="M2.5 5.500h27v25h-27z"/><path d="M2.500 9.500h27M7.500 3v4.500M24.500 3v4.500"/></g><rect x="7" y="19" width="2" height="2" fill="#e8e8e8"/><rect x="11" y="19" width="2" height="2" fill="#e8e8e8"/><rect x="15" y="19" width="2" height="2" fill="#e8e8e8"/><rect x="19" y="19" width="2" height="2" fill="#e8e8e8"/><rect x="23" y="19" width="2" height="2" fill="#e8e8e8"/></svg>
<div class="t" style="top:119.5px;font-size:12px;line-height:17px;color:#fff;letter-spacing:-0.25px;left:673px;width:600px;text-align:center;">Woche</div>
<svg style="left:1001px;top:84px" width="32" height="32" viewBox="0 0 32 32" fill="none" ><g stroke="#d4d4d4" stroke-width="1"><path d="M2.5 5.500h27v25h-27z"/><path d="M2.500 9.500h27M7.500 3v4.500M24.500 3v4.500"/></g><rect x="11" y="13" width="2" height="2" fill="#e8e8e8"/><rect x="15" y="13" width="2" height="2" fill="#e8e8e8"/><rect x="19" y="13" width="2" height="2" fill="#e8e8e8"/><rect x="23" y="13" width="2" height="2" fill="#e8e8e8"/><rect x="7" y="17" width="2" height="2" fill="#e8e8e8"/><rect x="11" y="17" width="2" height="2" fill="#e8e8e8"/><rect x="15" y="17" width="2" height="2" fill="#e8e8e8"/><rect x="19" y="17" width="2" height="2" fill="#e8e8e8"/><rect x="23" y="17" width="2" height="2" fill="#e8e8e8"/><rect x="7" y="21" width="2" height="2" fill="#e8e8e8"/><rect x="11" y="21" width="2" height="2" fill="#e8e8e8"/><rect x="15" y="21" width="2" height="2" fill="#e8e8e8"/><rect x="19" y="21" width="2" height="2" fill="#e8e8e8"/><rect x="7" y="25" width="2" height="2" fill="#e8e8e8"/><rect x="11" y="25" width="2" height="2" fill="#e8e8e8"/><rect x="15" y="25" width="2" height="2" fill="#e8e8e8"/><rect x="19" y="25" width="2" height="2" fill="#e8e8e8"/></svg>
<div class="t" style="top:119.5px;font-size:12px;line-height:17px;color:#fff;letter-spacing:-0.25px;left:717px;width:600px;text-align:center;">Monat</div>
<div style="left:1040px;top:82px;width:92px;height:76px;background:#383838;border:1px solid #707070;border-radius:4px"></div>
<svg style="left:1070px;top:84px" width="32" height="32" viewBox="0 0 32 32" fill="none" ><g stroke="#d4d4d4" stroke-width="1"><path d="M2.5 5.500h27v25h-27z"/><path d="M2.500 9.500h27M7.500 3v4.500M24.500 3v4.500"/></g><path d="M7.500 10v20.500" stroke="#d4d4d4"/><rect x="8.500" y="14.500" width="16" height="4" fill="#1c7fe0" stroke="#7cc0ff" stroke-width=".8"/><rect x="14.500" y="22.500" width="10" height="4" fill="#b02ab0" stroke="#e58ae5" stroke-width=".8"/></svg>
<div class="t" style="top:119.5px;font-size:12px;line-height:17px;color:#fff;letter-spacing:-0.25px;left:786px;width:600px;text-align:center;">Planungsansicht</div>
<div class="t" style="top:160.0px;font-size:11.5px;line-height:16px;color:#e8e8e8;letter-spacing:-0.15px;left:656.5px;width:600px;text-align:center;">Anordnen</div>
<svg style="left:1128px;top:164px" width="8" height="8" viewBox="0 0 8 8" fill="none" ><path d="M0.500 3V0.500H3M3 7.500h4.500V3M3.500 3.500l3.500 3.500M7 4.500V7H4.500" stroke="#c8c8c8" stroke-width="1"/></svg>
<div style="left:1139px;top:83px;width:1px;height:89px;background:#4f4f4f;"></div>
<svg style="left:1172px;top:86px" width="28" height="30" viewBox="0 0 28 30" fill="none" ><path d="M13.500 1v27M0 14.500h27" stroke="#66d982" stroke-width="1"/></svg>
<div class="t" style="top:119.5px;font-size:12px;line-height:17px;color:#fff;letter-spacing:-0.25px;left:886px;width:600px;text-align:center;">Kalender</div>
<div class="t" style="top:135.5px;font-size:12px;line-height:17px;color:#fff;letter-spacing:-0.25px;left:886px;width:600px;text-align:center;">hinzufügen<svg style="position:relative;display:inline-block;margin-left:4px;top:-2px" width="6" height="4" viewBox="0 0 6 4"><path d="M0.500 0.700l2.500 2.500 2.500-2.500" stroke="#e0e0e0" stroke-width="1.200" fill="none"/></svg></div>
<svg style="left:1236px;top:85px" width="30" height="30" viewBox="0 0 30 30" fill="none" ><g stroke="#dadada" stroke-width="1.250"><circle cx="15" cy="17.300" r="11.300"/><circle cx="14.900" cy="6" r="3.400" fill="#292929"/><circle cx="5" cy="23" r="3.400" fill="#292929"/><circle cx="25" cy="23" r="3.400" fill="#292929"/></g></svg>
<div class="t" style="top:119.5px;font-size:12px;line-height:17px;color:#fff;letter-spacing:-0.25px;left:951px;width:600px;text-align:center;">Kalender</div>
<div class="t" style="top:135.5px;font-size:12px;line-height:17px;color:#fff;letter-spacing:-0.25px;left:951px;width:600px;text-align:center;">teilen<svg style="position:relative;display:inline-block;margin-left:4px;top:-2px" width="6" height="4" viewBox="0 0 6 4"><path d="M0.500 0.700l2.500 2.500 2.500-2.500" stroke="#e0e0e0" stroke-width="1.200" fill="none"/></svg></div>
<div class="t" style="top:160.0px;font-size:11.5px;line-height:16px;color:#e8e8e8;letter-spacing:-0.15px;left:912px;width:600px;text-align:center;">Kalender verwalten</div>
<div style="left:1284px;top:83px;width:1px;height:89px;background:#4f4f4f;"></div>
<svg style="left:1297px;top:86px" width="15" height="15" viewBox="0 0 14 14" fill="none"><g stroke="#dcdcdc" stroke-width="1.050"><circle cx="3.500" cy="2.700" r="1.900"/><circle cx="10.500" cy="2.700" r="1.900"/><circle cx="7" cy="6.700" r="2.300"/><path d="M2.800 13c.5-2.300 2-3.700 4.200-3.700s3.700 1.400 4.200 3.700M1 7.500c.3-1.200 1-2 2-2.300M13 7.500c-.3-1.200-1-2-2-2.300"/></g></svg>
<div class="t" style="top:87.0px;font-size:12px;line-height:17px;color:#fff;letter-spacing:-0.2px;left:1317px;">Neue Gruppe</div>
<svg style="left:1297px;top:112px" width="15" height="15" viewBox="0 0 14 14" fill="none"><g stroke="#dcdcdc" stroke-width="1.050"><circle cx="3.500" cy="2.700" r="1.900"/><circle cx="10.500" cy="2.700" r="1.900"/><circle cx="7" cy="6.700" r="2.300"/><path d="M2.800 13c.5-2.300 2-3.700 4.200-3.700s3.700 1.400 4.200 3.700M1 7.500c.3-1.200 1-2 2-2.300M13 7.500c-.3-1.200-1-2-2-2.300"/></g></svg>
<div class="t" style="top:113.0px;font-size:12px;line-height:17px;color:#fff;letter-spacing:-0.07px;left:1317px;">Gruppen durchsuchen</div>
<div class="t" style="top:160.0px;font-size:11.5px;line-height:16px;color:#e8e8e8;letter-spacing:-0.15px;left:1067.5px;width:600px;text-align:center;">Gruppen</div>
<div style="left:1451px;top:83px;width:1px;height:89px;background:#4f4f4f;"></div>
<div style="left:1460px;top:82px;width:96px;height:22px;background:#292929;border:1px solid #606060;border-radius:4px"></div>
<div class="t" style="top:84.7px;font-size:12px;line-height:17px;color:#8c8c8c;letter-spacing:-0.287px;left:1464.5px;">Personen suchen</div>
<svg style="left:1466px;top:113px" width="12" height="13" viewBox="0 0 12 13" fill="none" ><g stroke="#dcdcdc" stroke-width="1"><rect x=".500" y=".500" width="11" height="12"/><circle cx="6" cy="4.300" r="2"/><path d="M2.500 9.500c.4-1.800 1.700-2.800 3.500-2.800s3.100 1 3.500 2.800M.500 10.500h11"/></g></svg>
<div class="t" style="top:111.0px;font-size:12px;line-height:17px;color:#fff;letter-spacing:-0.2px;left:1484px;">Adressbuch</div>
<div class="t" style="top:160.0px;font-size:11.5px;line-height:16px;color:#e8e8e8;letter-spacing:-0.15px;left:1207.5px;width:600px;text-align:center;">Suchen</div>
<div style="left:1563px;top:83px;width:1px;height:89px;background:#4f4f4f;"></div>
<div style="left:1580px;top:85px;width:32px;height:32px;background:#44007f;border-radius:5px;background:linear-gradient(170deg,#48008c,#3a006e)"></div>
<svg style="left:1580px;top:85px" width="32" height="32" viewBox="0 0 32 32" fill="none" ><path d="M14.800 6.300C9.500 7 6 11 6.500 14.500 7 18 9.500 20 11.500 20.500c3.500.8 7.500-1.500 8.300-5 .5-2.700-2.300-3.700-4.300-3-2 .5-3.300 1.500-3.700 2M11.200 20c.8 3 2.800 5.500 6.300 5.800 4 .200 7.500-3.300 7.900-8" stroke="#f4f4f4" stroke-width="2.800" stroke-linecap="round" stroke-linejoin="round"/></svg>
<div class="t" style="top:119.5px;font-size:12px;line-height:17px;color:#fff;letter-spacing:-0.25px;left:1295.5px;width:600px;text-align:center;">Anrufen</div>
<div class="t" style="top:160.0px;font-size:11.5px;line-height:16px;color:#e8e8e8;letter-spacing:-0.15px;left:1295.5px;width:600px;text-align:center;">SwyxIt!</div>
<div style="left:1627px;top:83px;width:1px;height:89px;background:#4f4f4f;"></div>
<svg style="left:2529px;top:160px" width="12" height="8" viewBox="0 0 12 8" fill="none" ><path d="M1 1.500l5 5 5-5" stroke="#e6e6e6" stroke-width="1.400"/></svg>
<div style="left:4px;top:104px;width:2.5px;height:32px;background:#4cb8f0;border-radius:2px"></div>
<svg style="left:12px;top:64px" width="20" height="15" viewBox="0 0 20 15" fill="none" ><g stroke="#f0f0f0" stroke-width="1.400"><rect x="1.700" y="1.700" width="16.600" height="11.300"/><path d="M1.700 2.500L10 8l8.300-5.500"/></g></svg>
<svg style="left:12px;top:109px" width="20" height="22" viewBox="0 0 20 22" fill="none" ><g stroke="#5cb8f0" stroke-width="1.300"><rect x="1.650" y="3.650" width="16.700" height="15.700"/><path d="M1.650 7.650h16.700M5.500 1.500v3M14.500 1.500v3"/></g><rect x="7" y="10" width="2" height="2" fill="#5cb8f0"/><rect x="10" y="10" width="2" height="2" fill="#5cb8f0"/><rect x="13" y="10" width="2" height="2" fill="#5cb8f0"/><rect x="4" y="13" width="2" height="2" fill="#5cb8f0"/><rect x="7" y="13" width="2" height="2" fill="#5cb8f0"/><rect x="10" y="13" width="2" height="2" fill="#5cb8f0"/><rect x="13" y="13" width="2" height="2" fill="#5cb8f0"/><rect x="4" y="16" width="2" height="2" fill="#5cb8f0"/><rect x="7" y="16" width="2" height="2" fill="#5cb8f0"/><rect x="10" y="16" width="2" height="2" fill="#5cb8f0"/></svg>
<svg style="left:14px;top:160px" width="16" height="16" viewBox="0 0 16 16" fill="none" ><defs><linearGradient id="cpLa" x1="0" y1="0" x2="0" y2="1"><stop offset="0" stop-color="#2cc0ff"/><stop offset=".35" stop-color="#1d90e0"/><stop offset=".65" stop-color="#52b872"/><stop offset="1" stop-color="#fbe41c"/></linearGradient><linearGradient id="cpRa" x1="0" y1="0" x2="0" y2="1"><stop offset="0" stop-color="#b65cf8"/><stop offset=".45" stop-color="#f0559a"/><stop offset="1" stop-color="#ffb54e"/></linearGradient></defs><path d="M8 .400h2c1 0 1.700.600 2 1.500l1 3.100H7z" fill="#1558d8"/><path d="M3.300.400h6.900L8.800 2 7.700 5.500 6.300 10.800H1.300C.300 10.800-.200 9.800.100 8.800L2 2C2.200 1 2.600.400 3.300.400z" fill="url(#cpLa)"/><path d="M3.800 11h4l-1 3.300-1.200 1.300c-.800 0-1.300-.500-1.600-1.300z" fill="#f5653a"/><path d="M14.700 5c1 0 1.500 1 1.200 2l-1.900 7c-.300 1-.900 1.600-1.700 1.600H5.600L7 14l1.100-3.500L9.500 5z" fill="url(#cpRa)"/></svg>
<svg style="left:11px;top:206px" width="22" height="20" viewBox="0 0 22 20" fill="none" ><g stroke="#f0f0f0" stroke-width="1.400"><circle cx="15.200" cy="4.600" r="3.300"/><path d="M10.800 10.200c1-1.500 2.600-2.300 4.400-2.300 2.300 0 4.300 1.400 5 3.700"/><circle cx="6.700" cy="10.200" r="3.300"/><path d="M1.200 19c.5-3 2.700-5.200 5.500-5.200s5 2.200 5.500 5.200"/></g></svg>
<svg style="left:14px;top:253px" width="17" height="21" viewBox="0 0 17 21" fill="none" ><g stroke="#f0f0f0" stroke-width="1.400"><path d="M5 3.700H1.700v15.600h13.600V3.700H12"/><path d="M5.700 5.700V2.500h1.600L8.500 1l1.200 1.500h1.600v3.200z"/><path d="M4.500 11.800l3 3 5.500-5.600" stroke-width="1.300"/></g></svg>
<svg style="left:11px;top:303px" width="22" height="17" viewBox="0 0 22 17" fill="none" ><path d="M1 9l3.500-3.500L11 12l-3.500 3.500z" fill="#1f5fc4"/><path d="M7.500 15.500L21 2l-3.500-1.500L4 11.500z" fill="#3a96f0"/></svg>
<svg style="left:13px;top:350px" width="18" height="19" viewBox="0 0 18 19" fill="none" ><g stroke="#f0f0f0" stroke-width="1.400"><circle cx="9" cy="4" r="2.900"/><circle cx="4.200" cy="14.800" r="2.900"/><circle cx="13.800" cy="14.800" r="2.900"/><path d="M9 7v3M4.200 11.900V10h9.600v1.900"/></g></svg>
<div style="left:12px;top:398px;width:20px;height:20px;background:#fff;"></div>
<svg style="left:12px;top:398px" width="20" height="20" viewBox="0 0 20 20" fill="none" ><rect x="8" y="5" width="8" height="10" fill="#6fd0e8"/><rect x="11" y="5" width="5" height="5" fill="#a6e4f2"/><rect x="8" y="10" width="8" height="5" fill="#2a9ac0"/><rect x="4" y="7" width="7" height="7" fill="#0f7a9c"/><circle cx="7.500" cy="10.500" r="1.700" stroke="#fff" stroke-width="1"/></svg>
<svg style="left:12px;top:446px" width="20" height="19" viewBox="0 0 20 19" fill="none" ><g stroke="#f0f0f0" stroke-width="1.400"><rect x="1.700" y="1.700" width="16.600" height="15.600" rx="2"/><rect x="5" y="5" width="4" height="3.600" stroke-width="1.200"/><rect x="11" y="5" width="4" height="3.600" stroke-width="1.200"/><rect x="5" y="10.800" width="4" height="3.600" stroke-width="1.200"/><rect x="11" y="10.800" width="4" height="3.600" stroke-width="1.200"/></g></svg>
<svg style="left:262px;top:195px" width="7" height="10" viewBox="0 0 7 10" fill="none" ><path d="M5.500 1L1.500 5l4 4" stroke="#f0f0f0" stroke-width="1.800"/></svg>
<svg style="left:66px;top:216px" width="8" height="11" viewBox="0 0 8 11" fill="none" ><path d="M6.500 1L1.500 5.500l5 4.500" stroke="#d8d8d8" stroke-width="1.200"/></svg>
<svg style="left:267px;top:216px" width="8" height="11" viewBox="0 0 8 11" fill="none" ><path d="M1.500 1l5 4.500-5 4.500" stroke="#d8d8d8" stroke-width="1.200"/></svg>
<div class="t" style="top:212.5px;font-size:13.3px;line-height:19px;color:#ececec;font-weight:700;letter-spacing:-0.32px;left:-128.5px;width:600px;text-align:center;">September 2025</div>
<div class="t" style="top:235.8px;font-size:12px;line-height:17px;color:#e0e0e0;letter-spacing:-0.2px;left:-212.5px;width:600px;text-align:center;">MO</div>
<div class="t" style="top:235.8px;font-size:12px;line-height:17px;color:#e0e0e0;letter-spacing:-0.2px;left:-184.5px;width:600px;text-align:center;">DI</div>
<div class="t" style="top:235.8px;font-size:12px;line-height:17px;color:#e0e0e0;letter-spacing:-0.2px;left:-156.5px;width:600px;text-align:center;">MI</div>
<div class="t" style="top:235.8px;font-size:12px;line-height:17px;color:#e0e0e0;letter-spacing:-0.2px;left:-128.5px;width:600px;text-align:center;">DO</div>
<div class="t" style="top:235.8px;font-size:12px;line-height:17px;color:#e0e0e0;letter-spacing:-0.2px;left:-100.5px;width:600px;text-align:center;">FR</div>
<div class="t" style="top:235.8px;font-size:12px;line-height:17px;color:#e0e0e0;letter-spacing:-0.2px;left:-72.5px;width:600px;text-align:center;">SA</div>
<div class="t" style="top:235.8px;font-size:12px;line-height:17px;color:#e0e0e0;letter-spacing:-0.2px;left:-44.5px;width:600px;text-align:center;">SO</div>
<div class="t" style="top:259.8px;font-size:12px;line-height:17px;color:#8f8f8f;letter-spacing:-0.8px;left:-212.9px;width:600px;text-align:center;">25</div>
<div class="t" style="top:259.8px;font-size:12px;line-height:17px;color:#8f8f8f;letter-spacing:-0.8px;left:-184.9px;width:600px;text-align:center;">26</div>
<div class="t" style="top:259.8px;font-size:12px;line-height:17px;color:#8f8f8f;letter-spacing:-0.8px;left:-156.9px;width:600px;text-align:center;">27</div>
<div class="t" style="top:259.8px;font-size:12px;line-height:17px;color:#8f8f8f;letter-spacing:-0.8px;left:-128.9px;width:600px;text-align:center;">28</div>
<div class="t" style="top:259.8px;font-size:12px;line-height:17px;color:#8f8f8f;letter-spacing:-0.8px;left:-100.9px;width:600px;text-align:center;">29</div>
<div class="t" style="top:259.8px;font-size:12px;line-height:17px;color:#8f8f8f;letter-spacing:-0.8px;left:-72.9px;width:600px;text-align:center;">30</div>
<div class="t" style="top:259.8px;font-size:12px;line-height:17px;color:#8f8f8f;letter-spacing:-0.8px;left:-44.900000000000006px;width:600px;text-align:center;">31</div>
<div class="t" style="top:283.8px;font-size:12px;line-height:17px;color:#f0f0f0;left:-212.5px;width:600px;text-align:center;">1</div>
<div class="t" style="top:283.8px;font-size:12px;line-height:17px;color:#f0f0f0;left:-184.5px;width:600px;text-align:center;">2</div>
<div class="t" style="top:283.8px;font-size:12px;line-height:17px;color:#f0f0f0;left:-156.5px;width:600px;text-align:center;">3</div>
<div class="t" style="top:283.8px;font-size:12px;line-height:17px;color:#f0f0f0;left:-128.5px;width:600px;text-align:center;">4</div>
<div class="t" style="top:283.8px;font-size:12px;line-height:17px;color:#f0f0f0;left:-100.5px;width:600px;text-align:center;">5</div>
<div class="t" style="top:283.8px;font-size:12px;line-height:17px;color:#f0f0f0;left:-72.5px;width:600px;text-align:center;">6</div>
<div class="t" style="top:283.8px;font-size:12px;line-height:17px;color:#f0f0f0;left:-44.5px;width:600px;text-align:center;">7</div>
<div class="t" style="top:307.8px;font-size:12px;line-height:17px;color:#f0f0f0;left:-212.5px;width:600px;text-align:center;">8</div>
<div class="t" style="top:307.8px;font-size:12px;line-height:17px;color:#f0f0f0;left:-184.5px;width:600px;text-align:center;">9</div>
<div class="t" style="top:307.8px;font-size:12px;line-height:17px;color:#f0f0f0;letter-spacing:-0.8px;left:-156.9px;width:600px;text-align:center;">10</div>
<div class="t" style="top:307.8px;font-size:12px;line-height:17px;color:#f0f0f0;letter-spacing:-0.8px;left:-128.9px;width:600px;text-align:center;">11</div>
<div class="t" style="top:307.8px;font-size:12px;line-height:17px;color:#f0f0f0;letter-spacing:-0.8px;left:-100.9px;width:600px;text-align:center;">12</div>
<div class="t" style="top:307.8px;font-size:12px;line-height:17px;color:#f0f0f0;letter-spacing:-0.8px;left:-72.9px;width:600px;text-align:center;">13</div>
<div class="t" style="top:307.8px;font-size:12px;line-height:17px;color:#f0f0f0;letter-spacing:-0.8px;left:-44.900000000000006px;width:600px;text-align:center;">14</div>
<div class="t" style="top:331.8px;font-size:12px;line-height:17px;color:#f0f0f0;letter-spacing:-0.8px;left:-212.9px;width:600px;text-align:center;">15</div>
<div class="t" style="top:331.8px;font-size:12px;line-height:17px;color:#f0f0f0;letter-spacing:-0.8px;left:-184.9px;width:600px;text-align:center;">16</div>
<div class="t" style="top:331.8px;font-size:12px;line-height:17px;color:#f0f0f0;letter-spacing:-0.8px;left:-156.9px;width:600px;text-align:center;">17</div>
<div class="t" style="top:331.8px;font-size:12px;line-height:17px;color:#f0f0f0;letter-spacing:-0.8px;left:-128.9px;width:600px;text-align:center;">18</div>
<div class="t" style="top:331.8px;font-size:12px;line-height:17px;color:#f0f0f0;letter-spacing:-0.8px;left:-100.9px;width:600px;text-align:center;">19</div>
<div class="t" style="top:331.8px;font-size:12px;line-height:17px;color:#f0f0f0;letter-spacing:-0.8px;left:-72.9px;width:600px;text-align:center;">20</div>
<div style="left:242px;top:327.0px;width:28px;height:24px;background:#0078d4;"></div>
<div class="t" style="top:331.8px;font-size:12px;line-height:17px;color:#fff;letter-spacing:-0.8px;left:-44.900000000000006px;width:600px;text-align:center;">21</div>
<div class="t" style="top:355.8px;font-size:12px;line-height:17px;color:#f0f0f0;letter-spacing:-0.8px;left:-212.9px;width:600px;text-align:center;">22</div>
<div class="t" style="top:355.8px;font-size:12px;line-height:17px;color:#f0f0f0;letter-spacing:-0.8px;left:-184.9px;width:600px;text-align:center;">23</div>
<div class="t" style="top:355.8px;font-size:12px;line-height:17px;color:#f0f0f0;letter-spacing:-0.8px;left:-156.9px;width:600px;text-align:center;">24</div>
<div class="t" style="top:355.8px;font-size:12px;line-height:17px;color:#f0f0f0;letter-spacing:-0.8px;left:-128.9px;width:600px;text-align:center;">25</div>
<div class="t" style="top:355.8px;font-size:12px;line-height:17px;color:#f0f0f0;letter-spacing:-0.8px;left:-100.9px;width:600px;text-align:center;">26</div>
<div class="t" style="top:355.8px;font-size:12px;line-height:17px;color:#f0f0f0;letter-spacing:-0.8px;left:-72.9px;width:600px;text-align:center;">27</div>
<div class="t" style="top:355.8px;font-size:12px;line-height:17px;color:#f0f0f0;letter-spacing:-0.8px;left:-44.900000000000006px;width:600px;text-align:center;">28</div>
<div class="t" style="top:379.8px;font-size:12px;line-height:17px;color:#f0f0f0;letter-spacing:-0.8px;left:-212.9px;width:600px;text-align:center;">29</div>
<div class="t" style="top:379.8px;font-size:12px;line-height:17px;color:#f0f0f0;letter-spacing:-0.8px;left:-184.9px;width:600px;text-align:center;">30</div>
<div class="t" style="top:400.5px;font-size:13.3px;line-height:19px;color:#ececec;font-weight:700;letter-spacing:-0.32px;left:-128.5px;width:600px;text-align:center;">Oktober 2025</div>
<div class="t" style="top:423.8px;font-size:12px;line-height:17px;color:#e0e0e0;letter-spacing:-0.2px;left:-212.5px;width:600px;text-align:center;">MO</div>
<div class="t" style="top:423.8px;font-size:12px;line-height:17px;color:#e0e0e0;letter-spacing:-0.2px;left:-184.5px;width:600px;text-align:center;">DI</div>
<div class="t" style="top:423.8px;font-size:12px;line-height:17px;color:#e0e0e0;letter-spacing:-0.2px;left:-156.5px;width:600px;text-align:center;">MI</div>
<div class="t" style="top:423.8px;font-size:12px;line-height:17px;color:#e0e0e0;letter-spacing:-0.2px;left:-128.5px;width:600px;text-align:center;">DO</div>
<div class="t" style="top:423.8px;font-size:12px;line-height:17px;color:#e0e0e0;letter-spacing:-0.2px;left:-100.5px;width:600px;text-align:center;">FR</div>
<div class="t" style="top:423.8px;font-size:12px;line-height:17px;color:#e0e0e0;letter-spacing:-0.2px;left:-72.5px;width:600px;text-align:center;">SA</div>
<div class="t" style="top:423.8px;font-size:12px;line-height:17px;color:#e0e0e0;letter-spacing:-0.2px;left:-44.5px;width:600px;text-align:center;">SO</div>
<div class="t" style="top:447.8px;font-size:12px;line-height:17px;color:#f0f0f0;left:-156.5px;width:600px;text-align:center;">1</div>
<div class="t" style="top:447.8px;font-size:12px;line-height:17px;color:#f0f0f0;left:-128.5px;width:600px;text-align:center;">2</div>
<div class="t" style="top:447.8px;font-size:12px;line-height:17px;color:#f0f0f0;left:-100.5px;width:600px;text-align:center;">3</div>
<div class="t" style="top:447.8px;font-size:12px;line-height:17px;color:#f0f0f0;left:-72.5px;width:600px;text-align:center;">4</div>
<div class="t" style="top:447.8px;font-size:12px;line-height:17px;color:#f0f0f0;left:-44.5px;width:600px;text-align:center;">5</div>
<div class="t" style="top:471.8px;font-size:12px;line-height:17px;color:#f0f0f0;left:-212.5px;width:600px;text-align:center;">6</div>
<div class="t" style="top:471.8px;font-size:12px;line-height:17px;color:#f0f0f0;left:-184.5px;width:600px;text-align:center;">7</div>
<div class="t" style="top:471.8px;font-size:12px;line-height:17px;color:#f0f0f0;left:-156.5px;width:600px;text-align:center;">8</div>
<div class="t" style="top:471.8px;font-size:12px;line-height:17px;color:#f0f0f0;left:-128.5px;width:600px;text-align:center;">9</div>
<div class="t" style="top:471.8px;font-size:12px;line-height:17px;color:#f0f0f0;letter-spacing:-0.8px;left:-100.9px;width:600px;text-align:center;">10</div>
<div class="t" style="top:471.8px;font-size:12px;line-height:17px;color:#f0f0f0;letter-spacing:-0.8px;left:-72.9px;width:600px;text-align:center;">11</div>
<div class="t" style="top:471.8px;font-size:12px;line-height:17px;color:#f0f0f0;letter-spacing:-0.8px;left:-44.900000000000006px;width:600px;text-align:center;">12</div>
<div class="t" style="top:495.8px;font-size:12px;line-height:17px;color:#f0f0f0;letter-spacing:-0.8px;left:-212.9px;width:600px;text-align:center;">13</div>
<div class="t" style="top:495.8px;font-size:12px;line-height:17px;color:#f0f0f0;letter-spacing:-0.8px;left:-184.9px;width:600px;text-align:center;">14</div>
<div class="t" style="top:495.8px;font-size:12px;line-height:17px;color:#f0f0f0;letter-spacing:-0.8px;left:-156.9px;width:600px;text-align:center;">15</div>
<div class="t" style="top:495.8px;font-size:12px;line-height:17px;color:#f0f0f0;letter-spacing:-0.8px;left:-128.9px;width:600px;text-align:center;">16</div>
<div class="t" style="top:495.8px;font-size:12px;line-height:17px;color:#f0f0f0;letter-spacing:-0.8px;left:-100.9px;width:600px;text-align:center;">17</div>
<div class="t" style="top:495.8px;font-size:12px;line-height:17px;color:#f0f0f0;letter-spacing:-0.8px;left:-72.9px;width:600px;text-align:center;">18</div>
<div class="t" style="top:495.8px;font-size:12px;line-height:17px;color:#f0f0f0;letter-spacing:-0.8px;left:-44.900000000000006px;width:600px;text-align:center;">19</div>
<div class="t" style="top:519.8px;font-size:12px;line-height:17px;color:#f0f0f0;letter-spacing:-0.8px;left:-212.9px;width:600px;text-align:center;">20</div>
<div class="t" style="top:519.8px;font-size:12px;line-height:17px;color:#f0f0f0;letter-spacing:-0.8px;left:-184.9px;width:600px;text-align:center;">21</div>
<div class="t" style="top:519.8px;font-size:12px;line-height:17px;color:#f0f0f0;letter-spacing:-0.8px;left:-156.9px;width:600px;text-align:center;">22</div>
<div class="t" style="top:519.8px;font-size:12px;line-height:17px;color:#f0f0f0;letter-spacing:-0.8px;left:-128.9px;width:600px;text-align:center;">23</div>
<div class="t" style="top:519.8px;font-size:12px;line-height:17px;color:#f0f0f0;letter-spacing:-0.8px;left:-100.9px;width:600px;text-align:center;">24</div>
<div class="t" style="top:519.8px;font-size:12px;line-height:17px;color:#f0f0f0;letter-spacing:-0.8px;left:-72.9px;width:600px;text-align:center;">25</div>
<div class="t" style="top:519.8px;font-size:12px;line-height:17px;color:#f0f0f0;letter-spacing:-0.8px;left:-44.900000000000006px;width:600px;text-align:center;">26</div>
<div class="t" style="top:543.8px;font-size:12px;line-height:17px;color:#f0f0f0;letter-spacing:-0.8px;left:-212.9px;width:600px;text-align:center;">27</div>
<div class="t" style="top:543.8px;font-size:12px;line-height:17px;color:#f0f0f0;letter-spacing:-0.8px;left:-184.9px;width:600px;text-align:center;">28</div>
<div class="t" style="top:543.8px;font-size:12px;line-height:17px;color:#f0f0f0;letter-spacing:-0.8px;left:-156.9px;width:600px;text-align:center;">29</div>
<div class="t" style="top:543.8px;font-size:12px;line-height:17px;color:#f0f0f0;letter-spacing:-0.8px;left:-128.9px;width:600px;text-align:center;">30</div>
<div class="t" style="top:543.8px;font-size:12px;line-height:17px;color:#f0f0f0;letter-spacing:-0.8px;left:-100.9px;width:600px;text-align:center;">31</div>
<div class="t" style="top:543.8px;font-size:12px;line-height:17px;color:#8f8f8f;left:-72.5px;width:600px;text-align:center;">1</div>
<div class="t" style="top:543.8px;font-size:12px;line-height:17px;color:#8f8f8f;left:-44.5px;width:600px;text-align:center;">2</div>
<div class="t" style="top:567.8px;font-size:12px;line-height:17px;color:#8f8f8f;left:-212.5px;width:600px;text-align:center;">3</div>
<div class="t" style="top:567.8px;font-size:12px;line-height:17px;color:#8f8f8f;left:-184.5px;width:600px;text-align:center;">4</div>
<div class="t" style="top:567.8px;font-size:12px;line-height:17px;color:#8f8f8f;left:-156.5px;width:600px;text-align:center;">5</div>
<div class="t" style="top:567.8px;font-size:12px;line-height:17px;color:#8f8f8f;left:-128.5px;width:600px;text-align:center;">6</div>
<div class="t" style="top:567.8px;font-size:12px;line-height:17px;color:#8f8f8f;left:-100.5px;width:600px;text-align:center;">7</div>
<div class="t" style="top:567.8px;font-size:12px;line-height:17px;color:#8f8f8f;left:-72.5px;width:600px;text-align:center;">8</div>
<div class="t" style="top:567.8px;font-size:12px;line-height:17px;color:#8f8f8f;left:-44.5px;width:600px;text-align:center;">9</div>
<div style="left:76px;top:617px;width:13px;height:13px;background:#424242;border:1px solid #8c8c8c"></div>
<div class="t" style="top:611.5px;font-size:14.67px;line-height:21px;color:#f2f2f2;letter-spacing:0.05px;left:94.5px;">Andere Kalender</div>
<svg style="left:64px;top:665px" width="10" height="7" viewBox="0 0 10 7" fill="none" ><path d="M0.800 0.800L5 5.200 9.200 0.800" stroke="#e8e8e8" stroke-width="1.300"/></svg>
<div style="left:76px;top:661px;width:13px;height:13px;background:#424242;border:1px solid #8c8c8c"></div>
<div class="t" style="top:655.5px;font-size:14.67px;line-height:21px;color:#f2f2f2;letter-spacing:0.05px;left:94.5px;">Freigegebene Kalen...</div>
<svg style="left:64px;top:781px" width="10" height="7" viewBox="0 0 10 7" fill="none" ><path d="M0.800 0.800L5 5.200 9.200 0.800" stroke="#e8e8e8" stroke-width="1.300"/></svg>
<div style="left:76px;top:777px;width:13px;height:13px;background:#424242;border:1px solid #8c8c8c"></div>
<div style="left:79px;top:780px;width:7px;height:7px;background:#fff;"></div>
<div class="t" style="top:771.5px;font-size:14.67px;line-height:21px;color:#f2f2f2;letter-spacing:0.05px;left:94.5px;">Meine Kalender</div>
<div style="left:95px;top:684px;width:13px;height:13px;background:#424242;border:1px solid #8c8c8c"></div>
<div class="t" style="top:682.0px;font-size:12px;line-height:16px;color:#f2f2f2;left:113.5px;"><span style="letter-spacing:-.300px">Vereinsbulli</span></div>
<div style="left:95px;top:708px;width:13px;height:13px;background:#424242;border:1px solid #8c8c8c"></div>
<div class="t" style="top:706.0px;font-size:12px;line-height:16px;color:#f2f2f2;left:113.5px;"><span style="letter-spacing:-.300px">Kunstrasen 1/2</span></div>
<div style="left:95px;top:732px;width:13px;height:13px;background:#424242;border:1px solid #8c8c8c"></div>
<div class="t" style="top:730.0px;font-size:12px;line-height:16px;color:#f2f2f2;left:113.5px;"><span style="letter-spacing:-.300px">Clubheim</span></div>
<div style="left:95px;top:800px;width:13px;height:13px;background:#424242;border:1px solid #8c8c8c"></div>
<div class="t" style="top:798.0px;font-size:12px;line-height:16px;color:#f2f2f2;left:113.5px;"><span style="letter-spacing:-.300px">Feiertage i...</span><span style="font-size:11px;letter-spacing:-0.05px;margin-left:2px"> - Jan.bues...</span></div>
<div style="left:95px;top:824px;width:13px;height:13px;background:#424242;border:1px solid #8c8c8c"></div>
<div class="t" style="top:822.0px;font-size:12px;line-height:16px;color:#f2f2f2;left:113.5px;"><span style="letter-spacing:-.300px">Geburtstage</span><span style="font-size:11px;letter-spacing:-0.05px;margin-left:0px"> - Jan.bues...</span></div>
<div style="left:95px;top:848px;width:13px;height:13px;background:#424242;border:1px solid #8c8c8c"></div>
<div class="t" style="top:846.0px;font-size:12px;line-height:16px;color:#f2f2f2;left:113.5px;"><span style="letter-spacing:-.300px">Kalender</span><span style="font-size:11px;letter-spacing:-0.05px;margin-left:0px"> - Jan.buesche...</span></div>
<div style="left:95px;top:872px;width:13px;height:13px;background:#424242;border:1px solid #8c8c8c"></div>
<div class="t" style="top:870.0px;font-size:12px;line-height:16px;color:#f2f2f2;left:113.5px;"><span style="letter-spacing:-.300px">Calendar</span><span style="font-size:11px;letter-spacing:0.2px;margin-left:0px"> - Autodart Pr...</span></div>
<div style="left:95px;top:896px;width:13px;height:13px;background:#424242;border:1px solid #8c8c8c"></div>
<div class="t" style="top:894.0px;font-size:12px;line-height:16px;color:#f2f2f2;left:113.5px;"><span style="letter-spacing:-.300px">Calendar</span><span style="font-size:11px;letter-spacing:0.2px;margin-left:0px"> - Berichte</span></div>
<div style="left:95px;top:920px;width:13px;height:13px;background:#424242;border:1px solid #8c8c8c"></div>
<div class="t" style="top:918.0px;font-size:12px;line-height:16px;color:#f2f2f2;left:113.5px;"><span style="letter-spacing:-.300px">Feiertage in Deu...</span><span style="font-size:11px;letter-spacing:0.2px;margin-left:2px"> - Büro</span></div>
<div style="left:95px;top:944px;width:13px;height:13px;background:#424242;border:1px solid #8c8c8c"></div>
<div class="t" style="top:942.0px;font-size:12px;line-height:16px;color:#f2f2f2;left:113.5px;"><span style="letter-spacing:-.300px">Geburtstage</span><span style="font-size:11px;letter-spacing:0.2px;margin-left:0px"> - Büro</span></div>
<div style="left:95px;top:968px;width:13px;height:13px;background:#424242;border:1px solid #8c8c8c"></div>
<div class="t" style="top:966.0px;font-size:12px;line-height:16px;color:#f2f2f2;left:113.5px;"><span style="letter-spacing:-.300px">Calendar</span><span style="font-size:11px;letter-spacing:0.2px;margin-left:0px"> - C1-Junioren</span></div>
<div style="left:95px;top:992px;width:13px;height:13px;background:#424242;border:1px solid #8c8c8c"></div>
<div class="t" style="top:990.0px;font-size:12px;line-height:16px;color:#f2f2f2;left:113.5px;"><span style="letter-spacing:-.300px">Feiertage i...</span><span style="font-size:11px;letter-spacing:0.2px;margin-left:2px"> - Hauptpl...</span></div>
<div style="left:95px;top:1016px;width:13px;height:13px;background:#424242;border:1px solid #8c8c8c"></div>
<div class="t" style="top:1014.0px;font-size:12px;line-height:16px;color:#f2f2f2;left:113.5px;"><span style="letter-spacing:-.300px">Geburtstage</span><span style="font-size:11px;letter-spacing:0.2px;margin-left:0px"> - Hauptpl...</span></div>
<div style="left:95px;top:1040px;width:13px;height:13px;background:#424242;border:1px solid #8c8c8c"></div>
<div class="t" style="top:1038.0px;font-size:12px;line-height:16px;color:#f2f2f2;left:113.5px;"><span style="letter-spacing:-.300px">Feiertage in D...</span><span style="font-size:11px;letter-spacing:0.2px;margin-left:5px"> - Hohne</span></div>
<div style="left:95px;top:1064px;width:13px;height:13px;background:#424242;border:1px solid #8c8c8c"></div>
<div class="t" style="top:1062.0px;font-size:12px;line-height:16px;color:#f2f2f2;left:113.5px;"><span style="letter-spacing:-.300px">Geburtstage</span><span style="font-size:11px;letter-spacing:0.2px;margin-left:0px"> - Hohne</span></div>
<div style="left:95px;top:1088px;width:13px;height:13px;background:#424242;border:1px solid #8c8c8c"></div>
<div class="t" style="top:1086.0px;font-size:12px;line-height:16px;color:#f2f2f2;left:113.5px;"><span style="letter-spacing:-.300px">Feiertage i...</span><span style="font-size:11px;letter-spacing:0.2px;margin-left:2px"> - Hohne/...</span></div>
<div style="left:95px;top:1112px;width:13px;height:13px;background:#424242;border:1px solid #8c8c8c"></div>
<div class="t" style="top:1110.0px;font-size:12px;line-height:16px;color:#f2f2f2;left:113.5px;"><span style="letter-spacing:-.300px">Geburtstage</span><span style="font-size:11px;letter-spacing:0.2px;margin-left:0px"> - Hohne/N...</span></div>
<div style="left:95px;top:1136px;width:13px;height:13px;background:#424242;border:1px solid #8c8c8c"></div>
<div class="t" style="top:1134.0px;font-size:12px;line-height:16px;color:#f2f2f2;left:113.5px;"><span style="letter-spacing:-.300px">Calendar</span><span style="font-size:11px;letter-spacing:0.2px;margin-left:0px"> - Info</span></div>
<div style="left:60px;top:1155px;width:198px;height:24px;background:#386406;"></div>
<div style="left:95px;top:1160px;width:13px;height:13px;background:#4a4a4a;border:1px solid #8c8c8c"></div>
<svg style="left:95px;top:1160px" width="13" height="13" viewBox="0 0 13 13" fill="none" ><path d="M3 6.800l2.500 2.700L10.200 3.500" stroke="#fff" stroke-width="1.500"/></svg>
<div class="t" style="top:1158.0px;font-size:12px;line-height:16px;color:#f2f2f2;left:113.5px;"><span style="letter-spacing:-.300px;font-weight:700">Kalender</span><span style="font-size:11px;letter-spacing:0.2px;margin-left:0px"> - Kunstrasen</span></div>
<div style="left:95px;top:1184px;width:13px;height:13px;background:#424242;border:1px solid #8c8c8c"></div>
<div class="t" style="top:1182.0px;font-size:12px;line-height:16px;color:#f2f2f2;left:113.5px;"><span style="letter-spacing:-.300px">Calendar</span><span style="font-size:11px;letter-spacing:0.2px;margin-left:0px"> - Mannschaft...</span></div>
<div style="left:95px;top:1208px;width:13px;height:13px;background:#424242;border:1px solid #8c8c8c"></div>
<div class="t" style="top:1206.0px;font-size:12px;line-height:16px;color:#f2f2f2;left:113.5px;"><span style="letter-spacing:-.300px">Birthdays</span></div>
<div style="left:95px;top:1232px;width:13px;height:13px;background:#424242;border:1px solid #8c8c8c"></div>
<div class="t" style="top:1230.0px;font-size:12px;line-height:16px;color:#f2f2f2;left:113.5px;"><span style="letter-spacing:-.300px">Feiertage i...</span><span style="font-size:11px;letter-spacing:0.2px;margin-left:2px"> - Nebenpl...</span></div>
<div style="left:95px;top:1256px;width:13px;height:13px;background:#424242;border:1px solid #8c8c8c"></div>
<div class="t" style="top:1254.0px;font-size:12px;line-height:16px;color:#f2f2f2;left:113.5px;"><span style="letter-spacing:-.300px">United States holidays</span></div>
<div style="left:95px;top:1280px;width:13px;height:13px;background:#424242;border:1px solid #8c8c8c"></div>
<div class="t" style="top:1278.0px;font-size:12px;line-height:16px;color:#f2f2f2;left:113.5px;"><span style="letter-spacing:-.300px">Calendar</span><span style="font-size:11px;letter-spacing:0.2px;margin-left:0px"> - Schiedsrichter</span></div>
<div style="left:95px;top:1304px;width:13px;height:13px;background:#424242;border:1px solid #8c8c8c"></div>
<div class="t" style="top:1302.0px;font-size:12px;line-height:16px;color:#f2f2f2;left:113.5px;"><span style="letter-spacing:-.300px">Feiertage i...</span><span style="font-size:11px;letter-spacing:0.2px;margin-left:2px"> - Seitenstr...</span></div>
<div style="left:95px;top:1328px;width:13px;height:13px;background:#424242;border:1px solid #8c8c8c"></div>
<div class="t" style="top:1326.0px;font-size:12px;line-height:16px;color:#f2f2f2;left:113.5px;"><span style="letter-spacing:-.300px">Geburtstage</span><span style="font-size:11px;letter-spacing:0.2px;margin-left:0px"> - Seitenstr...</span></div>
<div style="left:95px;top:1352px;width:13px;height:13px;background:#424242;border:1px solid #8c8c8c"></div>
<div class="t" style="top:1350.0px;font-size:12px;line-height:16px;color:#f2f2f2;left:113.5px;"><span style="letter-spacing:-.300px">Calendar</span><span style="font-size:11px;letter-spacing:0.2px;margin-left:0px"> - YouTube</span></div>
<svg style="left:2471px;top:56px" width="13" height="13" viewBox="0 0 16 16" fill="none"><defs><linearGradient id="cpLb" x1="0" y1="0" x2="0" y2="1"><stop offset="0" stop-color="#2cc0ff"/><stop offset=".35" stop-color="#1d90e0"/><stop offset=".65" stop-color="#52b872"/><stop offset="1" stop-color="#fbe41c"/></linearGradient><linearGradient id="cpRb" x1="0" y1="0" x2="0" y2="1"><stop offset="0" stop-color="#b65cf8"/><stop offset=".45" stop-color="#f0559a"/><stop offset="1" stop-color="#ffb54e"/></linearGradient></defs><path d="M8 .400h2c1 0 1.700.600 2 1.500l1 3.100H7z" fill="#1558d8"/><path d="M3.300.400h6.900L8.800 2 7.700 5.500 6.300 10.800H1.300C.300 10.800-.200 9.800.100 8.800L2 2C2.200 1 2.600.400 3.300.400z" fill="url(#cpLb)"/><path d="M3.800 11h4l-1 3.300-1.200 1.300c-.800 0-1.300-.500-1.600-1.300z" fill="#f5653a"/><path d="M14.700 5c1 0 1.500 1 1.200 2l-1.900 7c-.300 1-.900 1.600-1.700 1.600H5.600L7 14l1.100-3.500L9.500 5z" fill="url(#cpRb)"/></svg>
<div style="left:292px;top:205px;width:53px;height:24px;background:#444;border:1px solid #5a5a5a;border-radius:5px"></div>
<div class="t" style="top:208.5px;font-size:12px;line-height:17px;color:#f0f0f0;left:18.5px;width:600px;text-align:center;">Heute</div>
<div style="left:349px;top:205px;width:24px;height:24px;background:#444;border:1px solid #5a5a5a;border-radius:5px"></div>
<svg style="left:357px;top:211px" width="8" height="12" viewBox="0 0 8 12" fill="none" ><path d="M6.300 1L1.500 6l4.800 5" stroke="#e8e8e8" stroke-width="1.300"/></svg>
<div style="left:377px;top:205px;width:24px;height:24px;background:#444;border:1px solid #5a5a5a;border-radius:5px"></div>
<svg style="left:385px;top:211px" width="8" height="12" viewBox="0 0 8 12" fill="none" ><path d="M1.700 1l4.800 5-4.800 5" stroke="#cfcfcf" stroke-width="1.300"/></svg>
<div class="t" style="top:204.5px;font-size:18.67px;line-height:26px;color:#e8e8e8;letter-spacing:0.017px;left:421.5px;-webkit-text-stroke:.700px #e8e8e8;">21. September 2025</div>
<svg style="left:2383px;top:206px" width="20" height="21" viewBox="0 0 20 21" fill="none" ><g stroke="#d8d8d8" stroke-width="1"><rect x="1.500" y="3.500" width="17" height="16"/><path d="M1.500 7.500h17M5.500 1.500v2M14.500 1.500v2M4.500 8v11"/></g><rect x="5.500" y="9.500" width="9" height="2.500" fill="#1c7fe0" stroke="#6cb8ff" stroke-width=".7"/><rect x="8" y="14" width="6.500" height="2.500" fill="#b02ab0" stroke="#e58ae5" stroke-width=".7"/></svg>
<div class="t" style="top:209.8px;font-size:12px;line-height:17px;color:#f2f2f2;letter-spacing:-0.084px;left:2411.2px;">Planungsansicht</div>
<svg style="left:2506px;top:213px" width="12" height="8" viewBox="0 0 12 8" fill="none" ><path d="M1 1.200l5 5 5-5" stroke="#e8e8e8" stroke-width="1.300"/></svg>
<div class="t" style="top:1373.3px;font-size:11.33px;line-height:16px;color:#f0f0f0;letter-spacing:-0.188px;left:10px;">Elemente: 1</div>
<div class="t" style="top:1373.3px;font-size:11.33px;line-height:16px;color:#f0f0f0;letter-spacing:0.125px;left:1716px;">Alle Ordner sind auf dem neuesten Stand.</div>
<div class="t" style="top:1373.3px;font-size:11.33px;line-height:16px;color:#f0f0f0;letter-spacing:0.171px;left:1950.8px;">Verbunden mit Microsoft Exchange</div>
<svg style="left:2153px;top:1374px" width="16" height="15" viewBox="0 0 16 15" fill="none" ><g stroke="#e0e0e0" stroke-width="1"><path d="M5 9.500H1.500v-8h12v4"/></g><circle cx="9.500" cy="10" r="2" stroke="#e0e0e0" stroke-width="1.200"/><path d="M9.500 5.800v1.800M9.500 12.400v1.800M5.300 10h1.800M11.900 10h1.800M6.500 7l1.300 1.300M11.200 11.700l1.300 1.300M12.500 7l-1.300 1.300M7.800 11.700L6.500 13" stroke="#e0e0e0" stroke-width="1.100"/></svg>
<div class="t" style="top:1374.0px;font-size:11.33px;line-height:16px;color:#f0f0f0;letter-spacing:0.179px;left:2171.3px;">Anzeigeeinstellungen</div>
<div style="left:2295px;top:1371px;width:40px;height:19px;background:#2b2b2b;"></div>
<svg style="left:2308px;top:1375px" width="14" height="12" viewBox="0 0 14 12" fill="none" ><g stroke="#e8e8e8" stroke-width="1"><rect x=".500" y=".500" width="13" height="11"/><path d="M.500 1.500h13M3.500 2v9.500"/></g></svg>
<svg style="left:2348px;top:1374px" width="13" height="13" viewBox="0 0 13 13" fill="none" ><g stroke="#e8e8e8" stroke-width="1"><path d="M6.500 1.500v11M.500 .500h5.500v11.500c-1.500-.800-3.500-.800-5.500 0zM12.500 .500h-5.500v11.500c1.500-.800 3.500-.800 5.500 0z"/><path d="M2 3h2.500M2 5h2.500M2 7h2.500M2 9h2.500M8.500 3h2.500M8.500 5h2.500M8.500 7h2.500M8.500 9h2.500" stroke-width=".900"/></g></svg>
<div style="left:2381px;top:1381px;width:8px;height:1px;background:#d0d0d0;"></div>
<div style="left:2394px;top:1381px;width:100px;height:1px;background:#bdbdbd;"></div>
<div style="left:2442px;top:1376px;width:5px;height:11px;background:#bdbdbd;"></div>
<div style="left:2499px;top:1381px;width:9px;height:1px;background:#d0d0d0;"></div>
<div style="left:2503px;top:1377px;width:1px;height:9px;background:#d0d0d0;"></div>
<div class="t" style="top:1373.3px;font-size:11.33px;line-height:16px;color:#f0f0f0;letter-spacing:-0.525px;left:2520.5px;">100 %</div>
</body></html>
